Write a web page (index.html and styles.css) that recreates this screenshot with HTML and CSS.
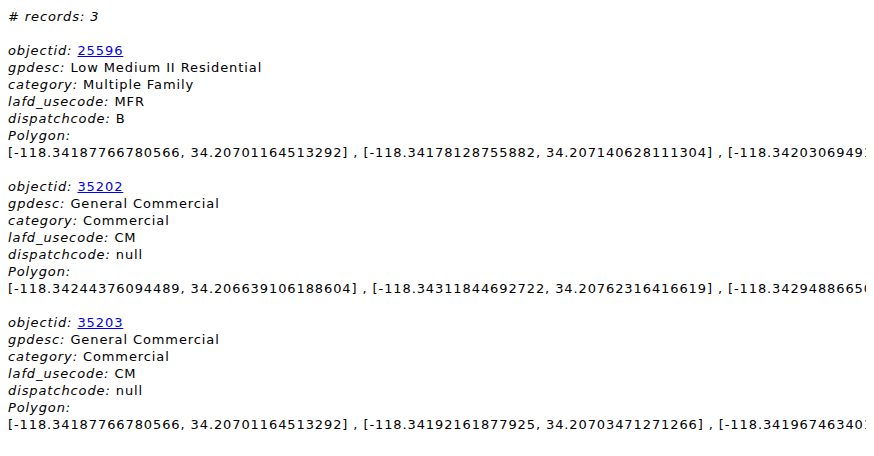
FILE: index.html
```html
<!DOCTYPE html>
<html>
<head>
<meta charset="utf-8">
<link rel="stylesheet" href="styles.css">
</head>
<body>
<div class="count"><i># records: 3</i></div>
<div class="record">
  <div class="line"><i>objectid:</i> <a href="#">25596</a></div>
  <div class="line"><i>gpdesc:</i> Low Medium II Residential</div>
  <div class="line"><i>category:</i> Multiple Family</div>
  <div class="line"><i>lafd_usecode:</i> MFR</div>
  <div class="line"><i>dispatchcode:</i> B</div>
  <div class="line"><i>Polygon:</i></div>
  <div class="line coords">[-118.34187766780566, 34.20701164513292] , [-118.34178128755882, 34.207140628111304] , [-118.34203069491524, 34.20726539155273] , [-118.34187766780566, 34.20701164513292]</div>
</div>
<div class="record">
  <div class="line"><i>objectid:</i> <a href="#">35202</a></div>
  <div class="line"><i>gpdesc:</i> General Commercial</div>
  <div class="line"><i>category:</i> Commercial</div>
  <div class="line"><i>lafd_usecode:</i> CM</div>
  <div class="line"><i>dispatchcode:</i> null</div>
  <div class="line"><i>Polygon:</i></div>
  <div class="line coords">[-118.34244376094489, 34.206639106188604] , [-118.34311844692722, 34.20762316416619] , [-118.34294886650342, 34.20770185117422] , [-118.34244376094489, 34.206639106188604]</div>
</div>
<div class="record">
  <div class="line"><i>objectid:</i> <a href="#">35203</a></div>
  <div class="line"><i>gpdesc:</i> General Commercial</div>
  <div class="line"><i>category:</i> Commercial</div>
  <div class="line"><i>lafd_usecode:</i> CM</div>
  <div class="line"><i>dispatchcode:</i> null</div>
  <div class="line"><i>Polygon:</i></div>
  <div class="line coords">[-118.34187766780566, 34.20701164513292] , [-118.34192161877925, 34.20703471271266] , [-118.34196746340127, 34.20697513418852] , [-118.34187766780566, 34.20701164513292]</div>
</div>
</body>
</html>
```
FILE: styles.css
```css
html, body {
  background: #ffffff;
}
body {
  margin: 8px;
  font-family: "DejaVu Sans", Verdana, sans-serif;
  font-size: 13px;
  line-height: 17px;
  letter-spacing: 0.9px;
  color: #000000;
  overflow: hidden;
}
.record {
  margin-top: 17px;
}
.line {
  white-space: nowrap;
}
a {
  color: #0000ee;
  text-decoration: underline;
}
```
